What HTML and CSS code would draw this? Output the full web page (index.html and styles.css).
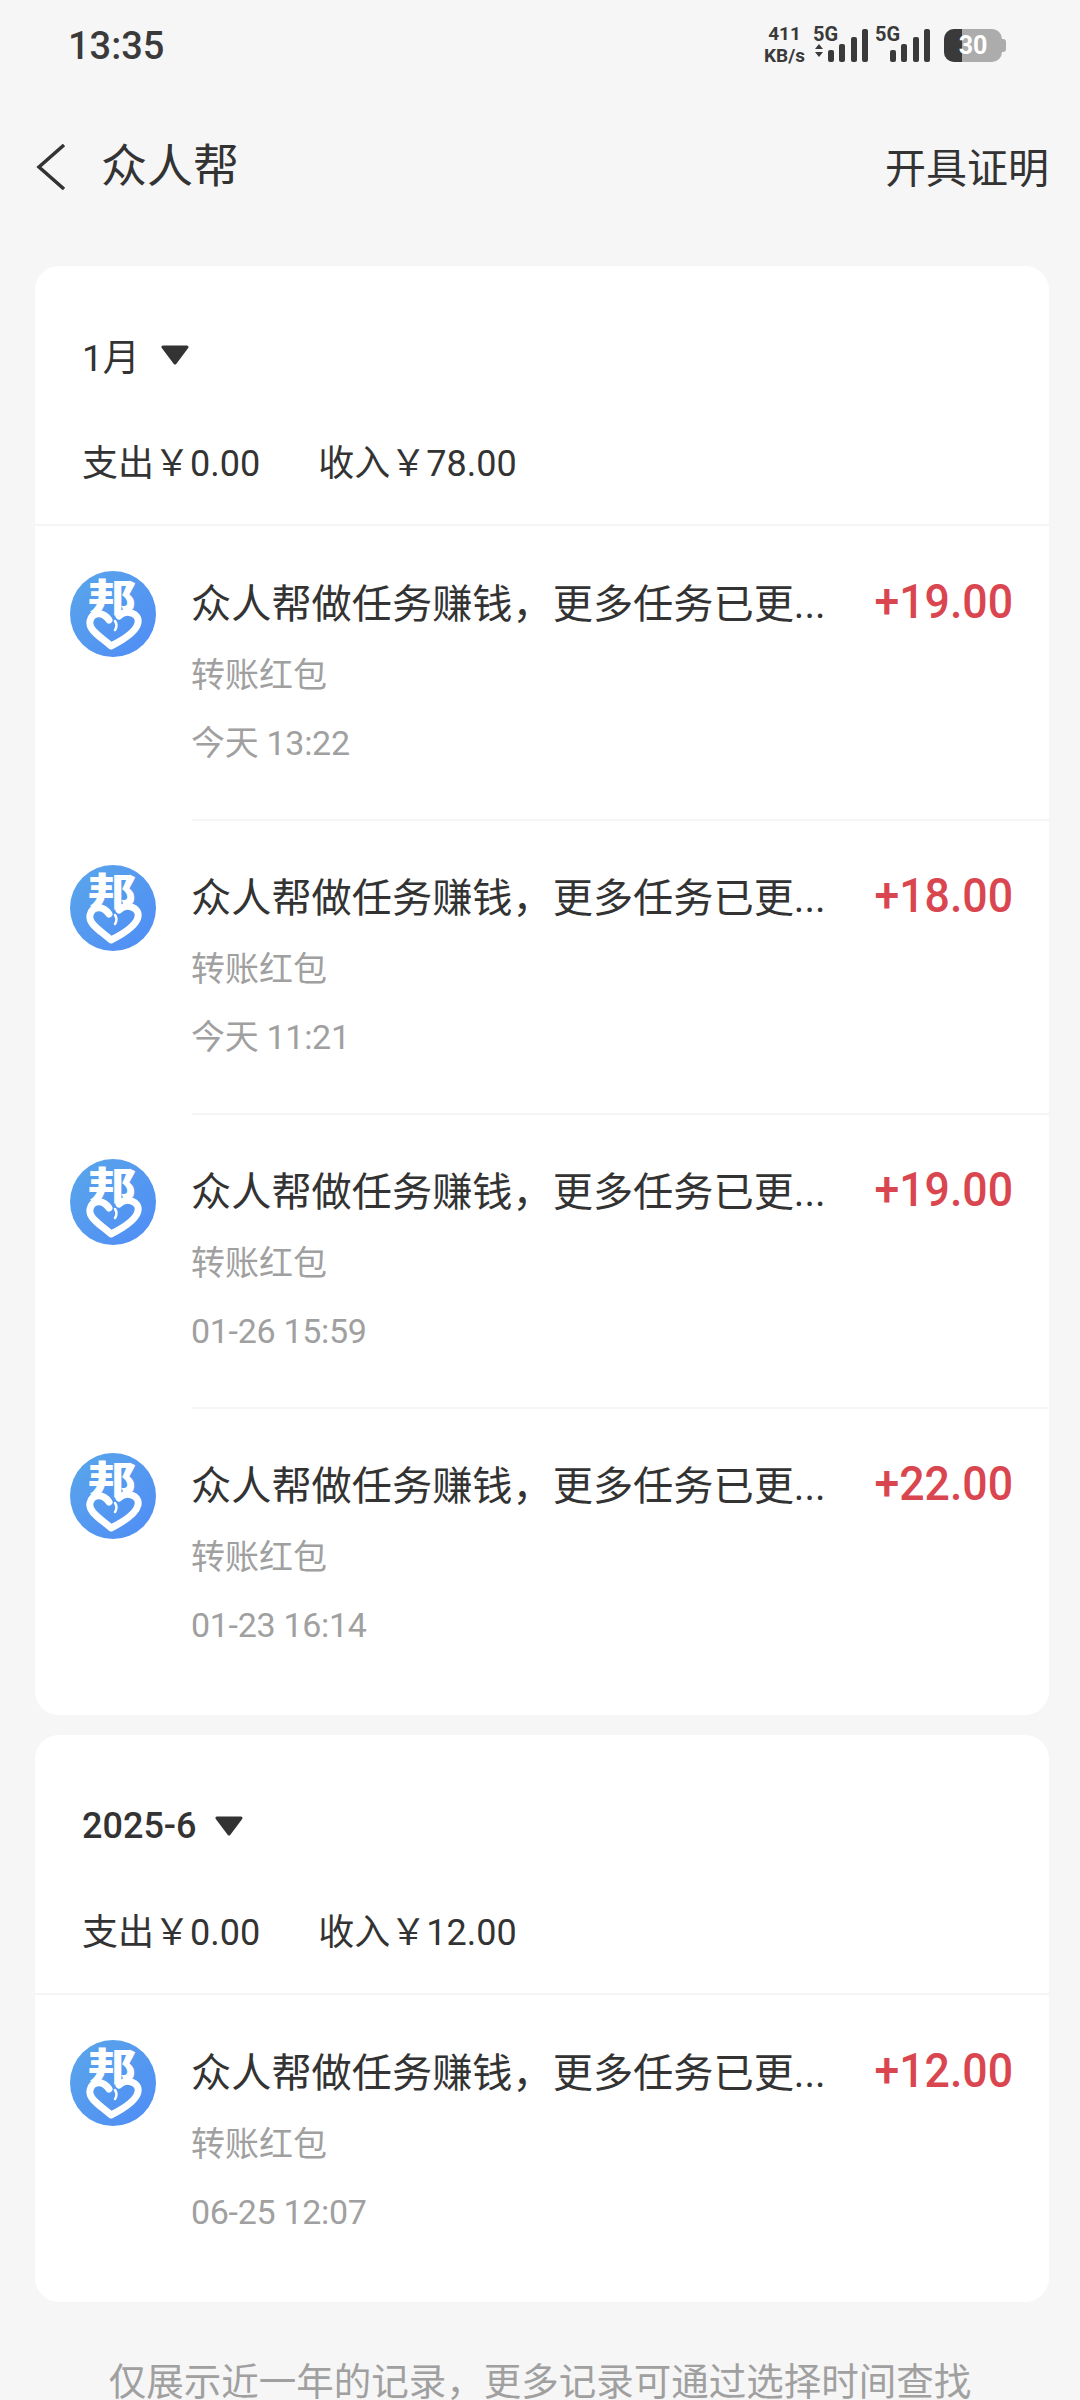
FILE: index.html
```html
<!DOCTYPE html>
<html lang="zh-CN">
<head>
  <meta charset="UTF-8">
  <meta name="viewport" content="width=device-width, initial-scale=1.0">
  <title>众人帮</title>
  <link rel="stylesheet" href="styles.css">
</head>
<body>
  <svg class="defs" width="0" height="0">
    <defs>
      <linearGradient id="logo-bg" x1="0" y1="0" x2="1" y2="1">
        <stop offset="0" stop-color="#5aa6ea"/>
        <stop offset="1" stop-color="#4f8cf6"/>
      </linearGradient>
      <symbol id="logo" viewBox="0 0 86 86">
        <circle cx="43" cy="43" r="43" fill="url(#logo-bg)"/>
        <text x="0" y="0" class="logo-char" text-anchor="middle" transform="translate(42 40) scale(1.28 1)">邦</text>
        <path d="M39 49C33 40 22 41 20 50C18 59 31 66 41 75C51 70 66 61 68 52C70 42 56 38 49 45"
              fill="none" stroke="#fff" stroke-width="7" stroke-linecap="round" stroke-linejoin="round"/>
        <path d="M45 50c2 3 2 6 0 9" fill="none" stroke="#fff" stroke-width="2.5" stroke-linecap="round"/>
      </symbol>
    </defs>
  </svg>

  <div class="status-bar">
    <span class="clock">13:35</span>
    <div class="status-icons">
      <div class="speed"><span>411</span><span>KB/s</span></div>
      <div class="signal">
        <span class="net">5G</span>
        <svg width="56" height="34" viewBox="0 0 56 34">
          <path d="M2 21l4-5 4 5zM2 24l4 5 4-5z" fill="#3a3a3a"/>
          <rect x="15" y="22" width="6" height="12" rx="2" fill="#3a3a3a"/>
          <rect x="26" y="16" width="6" height="18" rx="2" fill="#3a3a3a"/>
          <rect x="38" y="9" width="6" height="25" rx="2" fill="#3a3a3a"/>
          <rect x="49" y="1" width="6" height="33" rx="2" fill="#3a3a3a"/>
        </svg>
      </div>
      <div class="signal signal-two">
        <span class="net">5G</span>
        <svg width="56" height="34" viewBox="0 0 56 34">
          <rect x="15" y="22" width="6" height="12" rx="2" fill="#3a3a3a"/>
          <rect x="26" y="16" width="6" height="18" rx="2" fill="#3a3a3a"/>
          <rect x="38" y="9" width="6" height="25" rx="2" fill="#3a3a3a"/>
          <rect x="49" y="1" width="6" height="33" rx="2" fill="#3a3a3a"/>
        </svg>
      </div>
      <div class="battery"><div class="battery-level"></div><span>30</span></div>
    </div>
  </div>

  <div class="nav">
    <div class="nav-left">
      <svg class="back" width="32" height="46" viewBox="0 0 32 46">
        <path d="M29 1L4 23l25 22" fill="none" stroke="#333" stroke-width="3.5"/>
      </svg>
      <span class="nav-title">众人帮</span>
    </div>
    <span class="nav-action">开具证明</span>
  </div>

  <div class="card card-jan">
    <div class="month"><span>1月</span><svg class="caret" width="30" height="20" viewBox="0 0 30 20"><path d="M3 2h24L15 18z" fill="#333" stroke="#333" stroke-width="3" stroke-linejoin="round"/></svg></div>
    <div class="totals"><span>支出￥0.00</span><span>收入￥78.00</span></div>

    <div class="row">
      <svg class="avatar"><use href="#logo"/></svg>
      <div class="row-main">
        <div class="row-top">
          <div class="row-title">众人帮做任务赚钱，更多任务已更...</div>
          <div class="amount">+19.00</div>
        </div>
        <div class="row-sub">转账红包</div>
        <div class="row-time">今天 13:22</div>
      </div>
    </div>

    <div class="row">
      <svg class="avatar"><use href="#logo"/></svg>
      <div class="row-main">
        <div class="row-top">
          <div class="row-title">众人帮做任务赚钱，更多任务已更...</div>
          <div class="amount">+18.00</div>
        </div>
        <div class="row-sub">转账红包</div>
        <div class="row-time">今天 11:21</div>
      </div>
    </div>

    <div class="row">
      <svg class="avatar"><use href="#logo"/></svg>
      <div class="row-main">
        <div class="row-top">
          <div class="row-title">众人帮做任务赚钱，更多任务已更...</div>
          <div class="amount">+19.00</div>
        </div>
        <div class="row-sub">转账红包</div>
        <div class="row-time">01-26 15:59</div>
      </div>
    </div>

    <div class="row">
      <svg class="avatar"><use href="#logo"/></svg>
      <div class="row-main">
        <div class="row-top">
          <div class="row-title">众人帮做任务赚钱，更多任务已更...</div>
          <div class="amount">+22.00</div>
        </div>
        <div class="row-sub">转账红包</div>
        <div class="row-time">01-23 16:14</div>
      </div>
    </div>
  </div>

  <div class="card card-jun">
    <div class="month"><span>2025-6</span><svg class="caret" width="30" height="20" viewBox="0 0 30 20"><path d="M3 2h24L15 18z" fill="#333" stroke="#333" stroke-width="3" stroke-linejoin="round"/></svg></div>
    <div class="totals"><span>支出￥0.00</span><span>收入￥12.00</span></div>

    <div class="row">
      <svg class="avatar"><use href="#logo"/></svg>
      <div class="row-main">
        <div class="row-top">
          <div class="row-title">众人帮做任务赚钱，更多任务已更...</div>
          <div class="amount">+12.00</div>
        </div>
        <div class="row-sub">转账红包</div>
        <div class="row-time">06-25 12:07</div>
      </div>
    </div>
  </div>

  <p class="note">仅展示近一年的记录，更多记录可通过选择时间查找</p>
</body>
</html>
```

FILE: styles.css
```css
* {
  box-sizing: border-box;
}

html,
body {
  height: 2400px;
  overflow: hidden;
}

body {
  margin: 0;
  background-color: #f6f6f6;
  color: #333;
  font-family: Roboto, "Noto Sans CJK SC", sans-serif;
}

.defs {
  position: absolute;
}

.logo-char {
  font-family: "Noto Sans CJK SC", sans-serif;
  font-size: 38px;
  font-weight: 900;
  fill: #fff;
}

/* status bar */
.status-bar {
  height: 96px;
  padding: 22px 78px 0 68px;
  display: flex;
  justify-content: space-between;
  align-items: flex-start;
}

.clock {
  font-size: 38px;
  font-weight: 500;
  line-height: 48px;
  color: #3a3a3a;
}

.status-icons {
  display: flex;
  align-items: flex-end;
  height: 40px;
  color: #3a3a3a;
  font-weight: 700;
}

.speed {
  align-self: flex-start;
  width: 43px;
  margin: 1px 7px 0 0;
  display: flex;
  flex-direction: column;
  align-items: center;
  font-size: 19px;
  line-height: 22px;
  white-space: nowrap;
}

.signal {
  position: relative;
  width: 56px;
  height: 40px;
  display: flex;
  align-items: flex-end;
}

.signal-two {
  margin-left: 6px;
}

.net {
  position: absolute;
  left: 0;
  top: 2px;
  font-size: 20px;
  line-height: 20px;
}

.battery {
  position: relative;
  width: 58px;
  height: 33px;
  margin-left: 13px;
  background-color: #acacac;
  border-radius: 10px;
  color: #fff;
  font-size: 25px;
  line-height: 33px;
  text-align: center;
}

.battery::after {
  content: "";
  position: absolute;
  right: -4px;
  top: 10px;
  width: 4px;
  height: 13px;
  background-color: #acacac;
  border-radius: 0 3px 3px 0;
}

.battery-level {
  position: absolute;
  left: 0;
  top: 0;
  bottom: 0;
  width: 18px;
  background-color: #3a3a3a;
  border-radius: 10px 0 0 10px;
}

.battery span {
  position: relative;
}

/* nav */
.nav {
  height: 170px;
  padding: 0 31px 32px 35px;
  display: flex;
  justify-content: space-between;
  align-items: center;
}

.nav-left {
  display: flex;
  align-items: center;
}

.back {
  margin-right: 34px;
  position: relative;
  top: 2px;
}

.nav-title {
  font-size: 46px;
  position: relative;
  top: -3px;
}

.nav-action {
  font-size: 41px;
}

/* cards */
.card {
  margin: 0 31px 0 35px;
  background-color: #fff;
  border-radius: 24px;
}

.card-jan {
  height: 1449px;
}

.card-jun {
  height: 567px;
  margin-top: 20px;
}

.month {
  height: 120px;
  padding: 58px 0 0 47px;
  display: flex;
  align-items: center;
  font-size: 37px;
}

.card-jun .month {
  padding-top: 62px;
  font-size: 36px;
  font-weight: 500;
}

.caret {
  flex: none;
  margin-left: 20px;
}

.card-jun .caret {
  margin-left: 17px;
}

.totals {
  height: 140px;
  padding: 10px 0 0 47px;
  border-bottom: 2px solid #f5f5f5;
  display: flex;
  align-items: center;
  gap: 58px;
  font-size: 36px;
}

.row {
  position: relative;
  height: 294px;
  padding: 45px 0 0 35px;
  display: flex;
}

.row + .row::before {
  content: "";
  position: absolute;
  left: 157px;
  right: 0;
  top: -1px;
  height: 2px;
  background-color: #f5f5f5;
}

.avatar {
  flex: none;
  width: 86px;
  height: 86px;
  margin-right: 35px;
}

.row-main {
  flex: 1;
  min-width: 0;
}

.row-top {
  display: flex;
  justify-content: space-between;
  align-items: center;
  padding-right: 36px;
  height: 60px;
}

.row-title {
  padding-bottom: 2px;
  font-size: 40.2px;
  white-space: nowrap;
}

.amount {
  font-size: 48px;
  font-weight: 500;
  color: #d9464f;
  transform: scaleX(0.93);
  transform-origin: right center;
}

.row-sub {
  margin-top: 21px;
  font-size: 34px;
  line-height: 46px;
  color: #a0a0a0;
}

.row-time {
  margin-top: 22px;
  font-size: 34px;
  line-height: 46px;
  letter-spacing: -0.3px;
  color: #a0a0a0;
}

.note {
  margin: 49px 0 0;
  text-align: center;
  font-size: 37.5px;
  color: #a0a0a0;
}
```
